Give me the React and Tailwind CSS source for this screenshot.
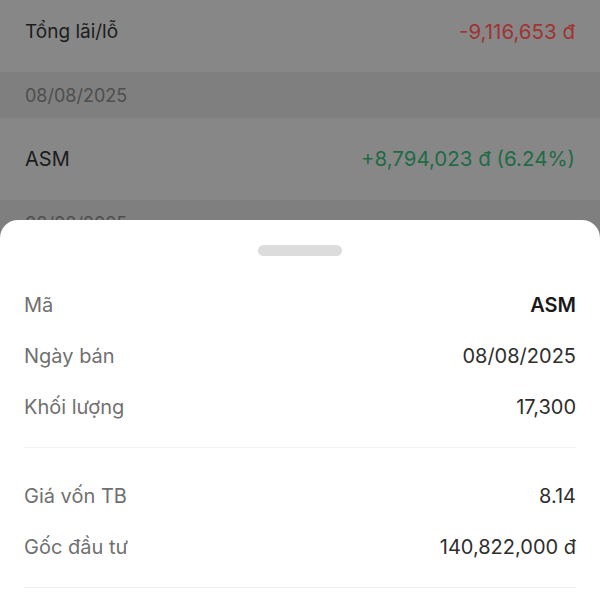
import React from 'react'

const topRows = [
  { type: 'row', label: 'Tổng lãi/lỗ', value: '-9,116,653 đ', tone: 'red', h: 'h-[72px]', pb: 'pb-[7px]' },
  { type: 'band', label: '08/08/2025', h: 'h-[46px]' },
  { type: 'row', label: 'ASM', value: '+8,794,023 đ (6.24%)', tone: 'green', h: 'h-[82px]', pb: 'pb-[0px]' },
  { type: 'band', label: '08/08/2025', h: 'h-[46px]' },
]

const detailGroups = [
  [
    { label: 'Mã', value: 'ASM', strong: true },
    { label: 'Ngày bán', value: '08/08/2025' },
    { label: 'Khối lượng', value: '17,300' },
  ],
  [
    { label: 'Giá vốn TB', value: '8.14' },
    { label: 'Gốc đầu tư', value: '140,822,000 đ' },
  ],
]

const SheetRow = ({ label, value, strong }) => (
  <div className="flex h-[51px] items-center justify-between">
    <span className="text-[20px] text-[#707070]">{label}</span>
    <span className={`text-[20px] ${strong ? 'font-semibold text-[#1a1a1a]' : 'text-[#2e2e2e]'}`}>{value}</span>
  </div>
)

const App = () => {
  return (
    <div className="relative h-[600px] w-[600px] overflow-hidden bg-[#878787]" style={{ fontFamily: 'Inter, "Noto Sans", sans-serif' }}>
      {/* dimmed list behind the sheet */}
      <div className="flex flex-col">
        {topRows.map((r, i) =>
          r.type === 'band' ? (
            <div key={i} className={`flex items-center bg-[#7f7f7f] px-[25px] ${r.h}`}>
              <span className="text-[18px] text-[#4e4e4e]">{r.label}</span>
            </div>
          ) : (
            <div key={i} className={`flex items-center justify-between px-[25px] ${r.h} ${r.pb}`}>
              <span className={`text-[19px] text-[#1c1c1c] ${r.label === 'ASM' ? 'text-[20px]' : ''}`}>{r.label}</span>
              <span className={`text-[20.5px] ${r.tone === 'red' ? 'text-[#a03333]' : 'text-[#1f6b45]'}`}>{r.value}</span>
            </div>
          )
        )}
      </div>

      {/* bottom sheet */}
      <div className="absolute inset-x-0 top-[220px] bottom-0 rounded-t-[18px] bg-white px-[24px]">
        <div className="flex justify-center pt-[25px]">
          <div className="h-[11px] w-[84px] rounded-full bg-[#dcdcdc]" />
        </div>
        <div className="pt-[23px] pb-[15px] border-b border-[#f0f0f0]">
          {detailGroups[0].map((d) => <SheetRow key={d.label} {...d} />)}
        </div>
        <div className="pt-[22px] pb-[15px] border-b border-[#f0f0f0]">
          {detailGroups[1].map((d) => <SheetRow key={d.label} {...d} />)}
        </div>
      </div>
    </div>
  )
}

export default App
